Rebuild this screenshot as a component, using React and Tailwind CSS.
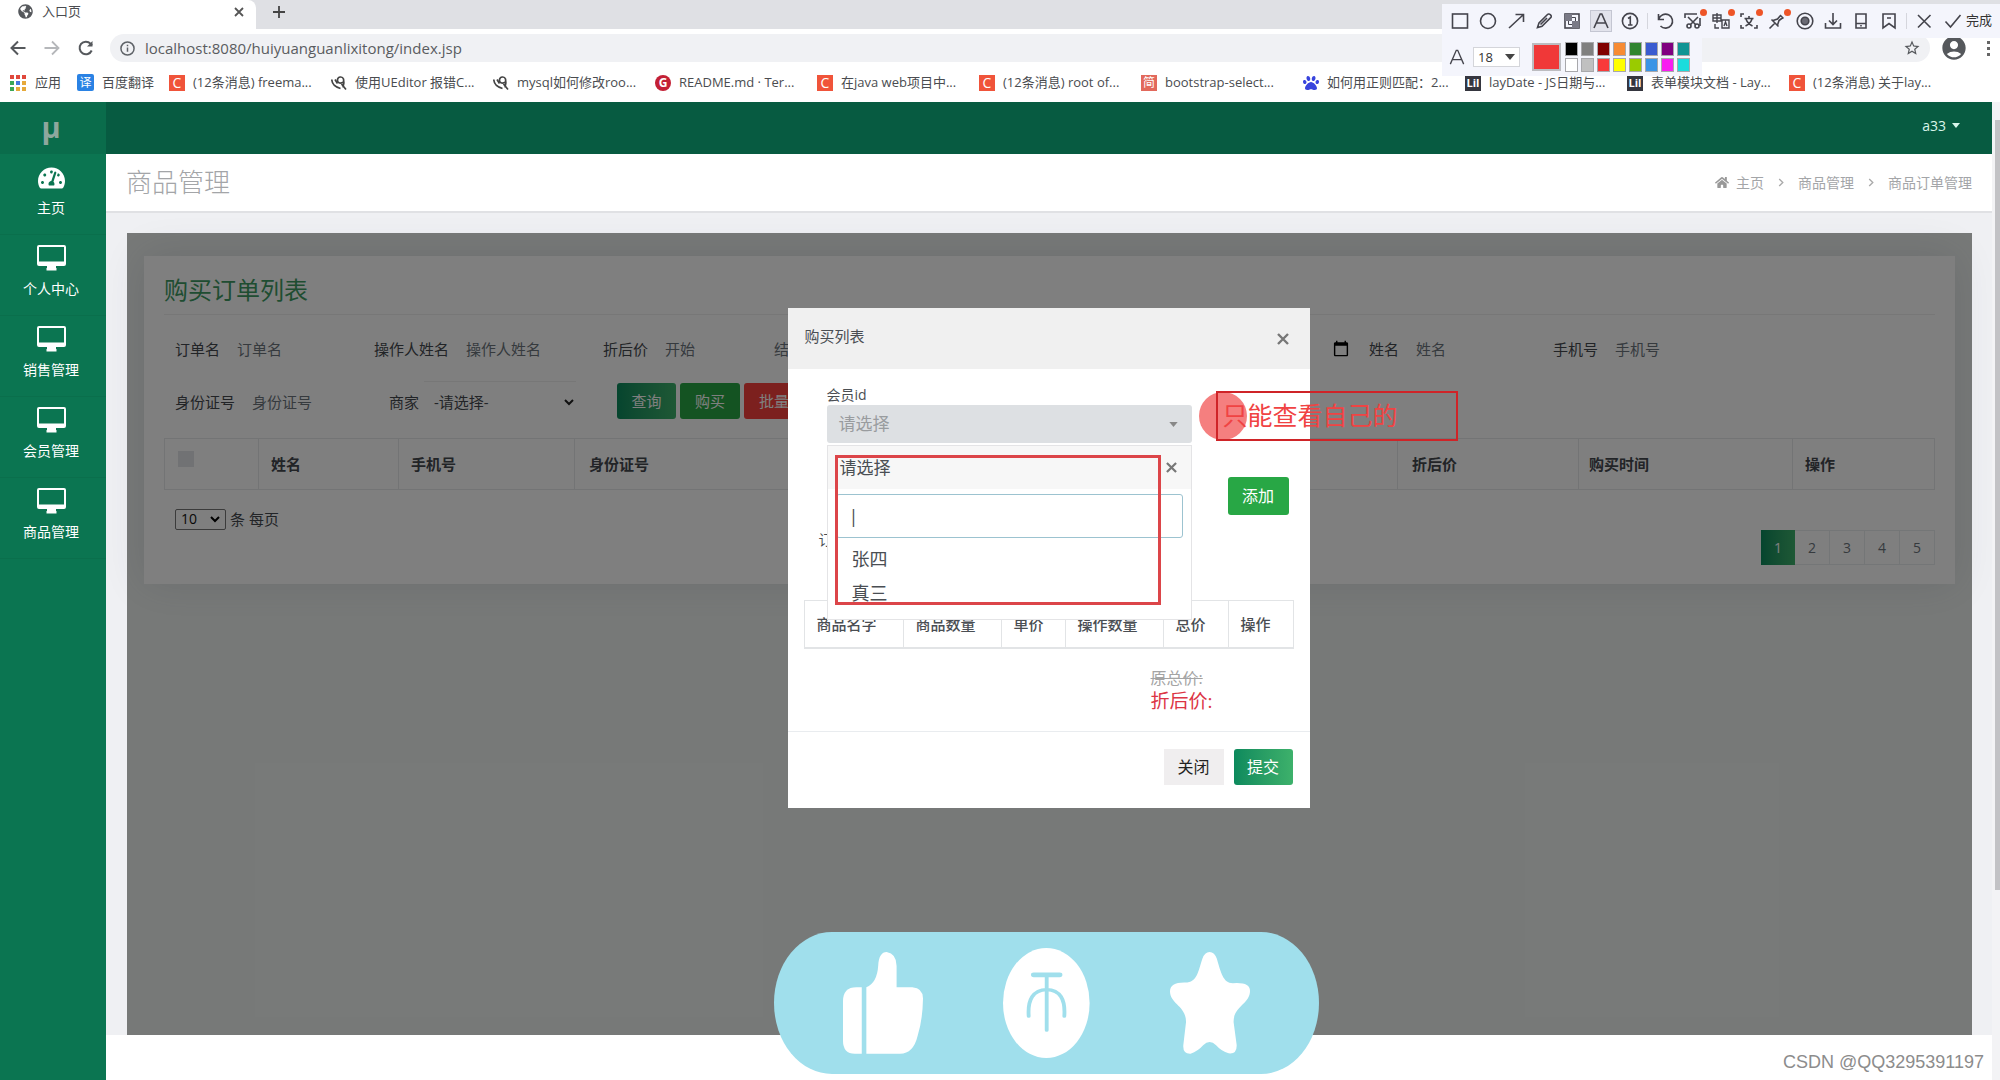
import React from "react";
import { FaTachometerAlt, FaHome, FaPaw, FaGlobeAmericas } from "react-icons/fa";
import { MdAccountCircle, MdStarOutline } from "react-icons/md";

const ICON = {
  fill: "none",
  stroke: "#44444c",
  strokeWidth: 1.6,
  viewBox: "0 0 18 18",
  className: "h-[18px] w-[18px]",
  "aria-hidden": true,
};

const TOOLS = [
  ["矩形", <rect x="1.5" y="2" width="15" height="14" />],
  ["椭圆", <circle cx="9" cy="9" r="7.5" />],
  ["箭头", <path d="M2 16 16 3M8.5 2.5H16.5V10" />],
  ["画笔", <path d="M2.5 15.5 4 11 12.5 2.5a1.8 1.8 0 0 1 2.6 0l.6.6a1.8 1.8 0 0 1 0 2.6L7 14.200zM5.500 12.500 12 6" />],
  [
    "马赛克",
    <>
      <rect x="2" y="2" width="14" height="14" />
      <path d="M2 2h7v7H2zM9 9h7v7H9z" fill="#7a7a86" stroke="none" />
      <path d="M9 5.500h3.500V9M5.500 9v3.500H9" strokeWidth="1" />
    </>,
  ],
  ["文字", <path d="M2 16 8.200 2h1.600L16 16M4.500 11h9" />],
  [
    "序号",
    <>
      <circle cx="9" cy="9" r="7.600" />
      <path d="M7 6.500 9.300 5v8M7 13h4.500" />
    </>,
  ],
  ["|"],
  ["撤销", <path d="M2.500 2v5.500H8M2.800 7.200A7 7 0 1 1 4.500 14" />],
  [
    "截图",
    <>
      <path d="M1 6V2h12M16 6v8M6 13l8-8M12 13 4 5" />
      <circle cx="5" cy="14" r="2" />
      <circle cx="13" cy="14" r="2" />
    </>,
    true,
  ],
  ["翻译", <path d="M1 3h8v6H1zM5 1v10M1 6h8M10 8h7v8h-7zM12 14l1.500-4 1.500 4M3 12v4h4" strokeWidth="1.400" />, true],
  ["识别", <path d="M1 5V2h3M1 13v3h3M17 13v3h-3M4.500 6.500h9M9 4v2.500M6 7c1 3 3.500 5.500 6.500 7M12 7c-1 3-3.500 5.500-6.500 7" />, true],
  ["钉住", <path d="M1.500 16.500 7 11M3.500 7.500 10.500 14.500M5 8.500 9.500 7 12.500 3.500M9.500 13 11 8.500 15 5.500M12 3l3.500 3.500" />, true],
  [
    "录制",
    <>
      <circle cx="9" cy="9" r="7.800" />
      <circle cx="9" cy="9" r="3.800" fill="#6a6a74" />
    </>,
  ],
  ["保存", <path d="M9 1v11M5 8.500 9 12.500 13 8.500M1.500 11v5h15v-5" />],
  ["手机", <path d="M4 2h10v14H4zM4 11.500h10M9 13v1.500" />],
  ["收藏", <path d="M3 2h12v14l-6-4.500L3 16zM7 6h4" />],
  ["|"],
  ["取消", <path d="M3 3 15.500 15.500M15.500 3 3 15.500" />],
];

const SWATCHES = [
  "bg-[#000000]", "bg-[#808080]", "bg-[#800000]", "bg-[#f78b33]", "bg-[#308430]", "bg-[#3a5bd0]", "bg-[#800080]", "bg-[#109494]",
  "bg-[#ffffff]", "bg-[#c0c0c0]", "bg-[#f83a3a]", "bg-[#ffff00]", "bg-[#9acb00]", "bg-[#3a94e6]", "bg-[#f81df0]", "bg-[#1bdcdc]",
];

function Annotator() {
  return (
    <div className="absolute top-1 right-0 flex flex-col items-start text-[#333]">
      <div className="flex h-[34px] items-center bg-[#f4f5fc] pr-2 pl-1">
        {TOOLS.map(([name, art, hot], i) =>
          name === "|" ? (
            <span key={i} className="mx-[3px] h-4 w-px bg-[#d5d6dd]" />
          ) : (
            <button
              key={i}
              aria-label={name}
              className={
                name === "文字"
                  ? "relative mx-1 flex h-[22px] w-[22px] items-center justify-center border border-[#c4c6d2] bg-[#e2e3ec]"
                  : "relative flex h-7 w-[28px] items-center justify-center"
              }
            >
              <svg {...ICON}>{art}</svg>
              {hot && <span className="absolute top-[2px] right-0 h-[7px] w-[7px] rounded-full bg-[#ee5528]" />}
            </button>
          ),
        )}
        <button className="ml-[6px] flex items-center gap-1 text-[13px]">
          <svg {...ICON}>
            <path d="M1.500 9.500 6.500 15 16.500 3" />
          </svg>
          完成
        </button>
      </div>
      <div className="flex h-[38px] items-center bg-[#f4f5fc] pr-3 pl-[7px]">
        <svg fill="none" stroke="#44444c" strokeWidth="1.500" viewBox="0 0 18 18" className="h-[18px] w-4">
          <path d="M1.500 17 8.200 1.500h1.600L16.500 17M4 12h10" />
        </svg>
        <label className="relative ml-2 flex h-5 w-[47px] items-center border border-[#d4d5da] bg-white">
          <select aria-label="字号" className="w-full appearance-none bg-transparent pl-1 text-[13px] leading-4">
            <option>18</option>
          </select>
          <svg viewBox="0 0 10 6" className="pointer-events-none absolute right-1 h-[6px] w-[10px]" fill="#444">
            <path d="M0 0h10L5 6z" />
          </svg>
        </label>
        <button aria-label="当前颜色" className="ml-3 h-7 w-[29px] border-2 border-[#bcbcc0] bg-[#f03838]" />
        <div className="ml-1 grid grid-cols-8 gap-x-[3px] gap-y-[2px]">
          {SWATCHES.map((c) => (
            <button key={c} aria-label={c} className={"h-[14px] w-[13px] border border-[#a8a8ac] " + c} />
          ))}
        </div>
      </div>
    </div>
  );
}

const csdn = <span className="flex h-4 w-4 items-center justify-center bg-[#f0543a] text-[14px] leading-4 text-white">C</span>;
const knife = (
  <svg viewBox="0 0 16 16" className="h-4 w-4" fill="none" stroke="#444" strokeWidth="1.700">
    <path d="M.8 4.500C1 9 3 11.500 9.500 13.500M4 4.500 6.500 8.500" />
    <path d="M12.500 6.800C9 9.500 6 7.500 6.500 4.500 7 1.500 11.500 1 12.500 4c.8 3.500.5 6-.5 8.500M10.500 9l4.500 5.500" />
  </svg>
);
const lay = <span className="flex h-4 w-[17px] items-center justify-center bg-[#35363f] text-[11px] leading-4 font-bold text-white">Lil</span>;

const BOOKMARKS = [
  [csdn, "(12条消息) freema..."],
  [knife, "使用UEditor 报错C..."],
  [knife, "mysql如何修改roo..."],
  [
    <span className="flex h-4 w-4 items-center justify-center rounded-full bg-[#c32035] text-[12px] leading-4 font-bold text-white">G</span>,
    "README.md · Ter...",
  ],
  [csdn, "在java web项目中..."],
  [csdn, "(12条消息) root of..."],
  [<span className="flex h-4 w-4 items-center justify-center bg-[#e2695c] text-[12px] leading-4 text-white">简</span>, "bootstrap-select..."],
  [<FaPaw className="h-4 w-4 text-[#3844dd]" />, "如何用正则匹配：2..."],
  [lay, "layDate - JS日期与..."],
  [lay, "表单模块文档 - Lay..."],
  [csdn, "(12条消息) 关于lay..."],
];

const APP_DOTS = [
  "bg-[#e0483c]", "bg-[#e0483c]", "bg-[#e0483c]", "bg-[#3aa757]", "bg-[#4478e0]", "bg-[#e6a93a]", "bg-[#3aa757]", "bg-[#e6a93a]", "bg-[#e6a93a]",
];

function Browser() {
  return (
    <header className="relative bg-white text-[#4a4c50]">
      <div className="flex h-[29px] bg-[#dfe0e4]">
        <div className="flex w-64 items-center rounded-tr-lg bg-white pr-3 pb-[6px] pl-[18px] text-[13px]">
          <FaGlobeAmericas className="h-[15px] w-[15px] text-[#55585c]" />
          <span className="ml-[9px] flex-1">入口页</span>
          <button aria-label="关闭标签页">
            <svg viewBox="0 0 10 10" className="h-[10px] w-[10px]" stroke="#555" strokeWidth="1.800">
              <path d="M1 1 9 9M9 1 1 9" />
            </svg>
          </button>
        </div>
        <button aria-label="新标签页" className="ml-4 pb-[6px]">
          <svg viewBox="0 0 14 14" className="h-[14px] w-[14px]" stroke="#444" strokeWidth="1.800">
            <path d="M7 1v12M1 7h12" />
          </svg>
        </button>
      </div>
      <div className="flex h-[38px] items-center pr-2 pl-[10px]">
        <button aria-label="后退">
          <svg viewBox="0 0 16 16" className="h-4 w-4" fill="none" stroke="#55585c" strokeWidth="2">
            <path d="M15.500 8H2M8 1.500 1.500 8 8 14.500" />
          </svg>
        </button>
        <button aria-label="前进" className="ml-[18px]">
          <svg viewBox="0 0 16 16" className="h-4 w-4" fill="none" stroke="#b5b7ba" strokeWidth="1.800">
            <path d="M.5 8H14M8 1.500 14.500 8 8 14.500" />
          </svg>
        </button>
        <button aria-label="刷新" className="ml-[18px]">
          <svg viewBox="0 0 16 16" className="h-4 w-4" fill="none" stroke="#55585c" strokeWidth="2">
            <path d="M13.700 10.500A6.300 6.300 0 1 1 12.500 3.600L14 5.300" />
            <path d="M14.500 1v5.500H9z" fill="#55585c" stroke="none" />
          </svg>
        </button>
        <div className="ml-4 flex h-7 flex-1 items-center rounded-full bg-[#f0f1f4] pr-[9px] pl-[10px]">
          <svg viewBox="0 0 16 16" className="h-[15px] w-[15px]" fill="none" stroke="#5f6368" strokeWidth="1.600">
            <circle cx="8" cy="8" r="7" />
            <path d="M8 7v4.500M8 4v1.600" />
          </svg>
          <input
            aria-label="地址"
            className="ml-[10px] flex-1 bg-transparent text-[15px] text-[#5a5c60] outline-none"
            defaultValue="localhost:8080/huiyuanguanlixitong/index.jsp"
          />
          <MdStarOutline className="h-[18px] w-[18px] text-[#55585c]" />
        </div>
        <MdAccountCircle className="ml-[10px] h-7 w-7 text-[#55585c]" />
        <button aria-label="菜单" className="ml-[19px] flex flex-col gap-[3px] pr-[2px]">
          <span className="h-[3px] w-[3px] bg-[#666]" />
          <span className="h-[3px] w-[3px] bg-[#666]" />
          <span className="h-[3px] w-[3px] bg-[#666]" />
        </button>
      </div>
      <nav className="flex h-[35px] items-center overflow-hidden pb-1 pl-[10px] text-[13px] whitespace-nowrap">
        <a href="#apps" className="flex w-[67px] shrink-0 items-center gap-[9px]">
          <span className="grid grid-cols-3 gap-[2px]">
            {APP_DOTS.map((c, i) => (
              <span key={i} className={"h-[4px] w-[4px] " + c} />
            ))}
          </span>
          应用
        </a>
        <a href="#fanyi" className="flex w-[92px] shrink-0 items-center gap-2">
          <span className="flex h-[17px] w-[17px] items-center justify-center rounded-[2px] bg-[#2a82e4] text-[12px] leading-4 text-white">译</span>
          百度翻译
        </a>
        {BOOKMARKS.map(([icon, text], i) => (
          <a key={i} href="#bookmark" className="flex w-[162px] shrink-0 items-center gap-2">
            <span className="flex w-4 shrink-0">{icon}</span>
            {text}
          </a>
        ))}
      </nav>
      <Annotator />
    </header>
  );
}

function Monitor() {
  return (
    <svg viewBox="0 0 29 26" className="h-[26px] w-[29px]" fill="currentColor" aria-hidden="true">
      <path fillRule="evenodd" d="M2 0h25a2 2 0 0 1 2 2v17a2 2 0 0 1-2 2h-8v2h.5v2.500h-10V23h.5v-2H2a2 2 0 0 1-2-2V2A2 2 0 0 1 2 0zM2 2v14.500h25V2z" />
    </svg>
  );
}

function Sidebar() {
  return (
    <aside className="flex w-[106px] shrink-0 flex-col bg-[#0b7551] text-[14px] leading-5 text-white">
      <div className="flex h-[52px] items-center justify-center bg-[#0a6c4b] pr-1 pb-[3px] font-['Open_Sans'] text-[29px] font-bold text-[#8ea79d]">μ</div>
      {["主页", "个人中心", "销售管理", "会员管理", "商品管理"].map((t, i) => (
        <a
          key={t}
          href="#menu"
          className={
            i === 0
              ? "flex h-[81px] flex-col items-center gap-2 border-b border-[#0a6f4c] pt-3 pr-1"
              : "flex h-[81px] flex-col items-center gap-2 border-b border-[#0a6f4c] pt-[10px] pr-1"
          }
        >
          {i === 0 ? <FaTachometerAlt className="h-6 w-[27px]" /> : <Monitor />}
          {t}
        </a>
      ))}
    </aside>
  );
}

function Field({ id, label }) {
  return (
    <>
      <label htmlFor={id} className="mr-[5px] shrink-0">
        {label}
      </label>
      <input id={id} placeholder={label} className="mr-1 h-10 w-[145px] shrink-0 px-3 placeholder:text-[#6c757d]" />
    </>
  );
}

const green = "bg-linear-to-r from-[#0b8a5d] to-[#3db16b]";

function OrderCard() {
  return (
    <section className="h-[328px] bg-white px-5 pt-[18px] text-[#44484e] shadow-[0_0_40px_rgba(60,60,90,0.120)]">
      <h2 className="border-b border-[#eee] pb-2 text-[24px] leading-8 text-[#3f9a63]">购买订单列表</h2>
      <form className="mt-2 text-[15px]">
        <div className="flex h-[52px] items-center pl-[11px]">
          <Field id="order" label="订单名" />
          <Field id="operator" label="操作人姓名" />
          <label htmlFor="from" className="mr-[5px] shrink-0">
            折后价
          </label>
          <input id="from" placeholder="开始" className="h-10 w-[109px] shrink-0 px-3 placeholder:text-[#6c757d]" />
          <input aria-label="结束" placeholder="结束" className="mr-1 h-10 w-[109px] shrink-0 px-3 placeholder:text-[#6c757d]" />
          <label htmlFor="date" className="mr-[5px] shrink-0">
            购买时间
          </label>
          <input id="date" type="date" className="mr-[5px] h-10 w-[210px] shrink-0 px-3" />
          <input
            aria-label="购买时间结束"
            type="date"
            className="mr-[5px] h-10 w-[209px] shrink-0 px-3 [&::-webkit-calendar-picker-indicator]:h-[18px] [&::-webkit-calendar-picker-indicator]:w-[18px]"
          />
          <Field id="name" label="姓名" />
          <Field id="phone" label="手机号" />
        </div>
        <div className="flex h-[54px] items-center pl-[11px]">
          <Field id="idcard" label="身份证号" />
          <label htmlFor="shop" className="mr-[5px]">
            商家
          </label>
          <div className="relative flex h-[42px] w-[152px] items-center border-t border-[#eee]">
            <select id="shop" className="h-full w-full appearance-none pl-[10px]">
              <option>-请选择-</option>
            </select>
            <svg viewBox="0 0 10 7" className="pointer-events-none absolute right-[2px] h-[7px] w-[10px]" fill="none" stroke="#222" strokeWidth="2">
              <path d="M1 1l4 4 4-4" />
            </svg>
          </div>
          <div className="ml-[41px] flex gap-1 pb-[2px] text-white">
            <button type="button" className={"h-9 w-[59px] rounded-[3px] " + green}>
              查询
            </button>
            <button type="button" className="h-9 w-[60px] rounded-[3px] bg-[#28a745]">
              购买
            </button>
            <button type="button" className="h-9 w-[90px] rounded-[3px] bg-[#f8403c]">
              批量删除
            </button>
          </div>
        </div>
      </form>
      <table className="mt-[9px] w-full table-fixed border-collapse text-left text-[15px]">
        <thead>
          <tr className="h-[51px]">
            <th className="w-[94px] border border-[#e6e8ea] pl-[13px]">
              <input type="checkbox" aria-label="全选" className="mb-1 h-4 w-4 appearance-none bg-[#e3e4e8]" />
            </th>
            <th className="w-[140px] border border-[#e6e8ea] pl-3">姓名</th>
            <th className="w-[176px] border border-[#e6e8ea] pl-3">手机号</th>
            <th className="border border-[#e6e8ea] pl-[14px]">身份证号</th>
            <th className="w-[181px] border border-[#e6e8ea] pl-[14px]">折后价</th>
            <th className="w-[214px] border border-[#e6e8ea] pl-[10px]">购买时间</th>
            <th className="w-[142px] border border-[#e6e8ea] pl-3">操作</th>
          </tr>
        </thead>
      </table>
      <div className="flex items-start justify-between pl-[11px] text-[15px]">
        <label className="mt-[18px] flex items-center gap-1">
          <span className="relative flex h-[21px] w-[51px] items-center rounded-[2px] border border-[#767676]">
            <select className="h-full w-full appearance-none pl-[5px] text-[14px] leading-[18px] text-[#111]">
              <option>10</option>
            </select>
            <svg viewBox="0 0 10 7" className="pointer-events-none absolute right-[5px] h-[7px] w-[10px]" fill="none" stroke="#000" strokeWidth="2">
              <path d="M1 1l4 4 4-4" />
            </svg>
          </span>
          条 每页
        </label>
        <nav aria-label="分页" className="mt-10 flex">
          {[1, 2, 3, 4, 5].map((n) => (
            <button
              key={n}
              className={
                n === 1
                  ? "h-[35px] w-[34px] text-[14px] text-white " + green
                  : "h-[35px] w-[35px] border border-l-0 border-[#e9ecef] text-[14px] text-[#6d757c]"
              }
            >
              {n}
            </button>
          ))}
        </nav>
      </div>
    </section>
  );
}

function Close({ size }) {
  return (
    <svg viewBox="0 0 12 12" className={size} stroke="#777" strokeWidth="2.400">
      <path d="M1 1 11 11M11 1 1 11" />
    </svg>
  );
}

function MemberMenu() {
  return (
    <div className="absolute inset-x-0 top-full z-10 mt-[2px] border border-[#e4e4e6] bg-white">
      <div className="flex h-[43px] items-center justify-between bg-[#f7f7f7] pr-[14px] pl-3 text-[17px]">
        请选择
        <button aria-label="关闭下拉">
          <Close size="h-[11px] w-[11px]" />
        </button>
      </div>
      <div className="px-2 pt-[5px]">
        <input
          aria-label="搜索会员"
          className="block h-11 w-full rounded-[3px] border border-[#9cc3d0] px-3 text-[18px] outline-none"
          defaultValue="|"
        />
      </div>
      <ul className="pt-1 pb-[9px] pl-6 text-[18px] leading-[34px]">
        <li>张四</li>
        <li>真三</li>
      </ul>
    </div>
  );
}

function Modal() {
  return (
    <div role="dialog" aria-label="购买列表" className="relative flex h-[500px] w-[522px] flex-col bg-white text-[#4a4e53]">
      <div className="flex h-[61px] items-center justify-between bg-[#f0f0f0] pr-[21px] pl-[17px]">
        <h3 className="pb-[5px] text-[15px]">购买列表</h3>
        <button aria-label="关闭">
          <Close size="h-3 w-3" />
        </button>
      </div>
      <div className="flex h-[231px] items-start pt-[18px] pl-[39px]">
        <div className="w-[365px] shrink-0">
          <label htmlFor="member" className="block h-[18px] text-[14px] leading-4">
            会员id
          </label>
          <div className="relative">
            <button id="member" className="flex h-[38px] w-full items-center justify-between rounded-[3px] bg-[#dde0e3] pr-[14px] pl-3 text-[17px] text-[#999c9f]">
              请选择
              <svg viewBox="0 0 10 6" className="h-[5px] w-[9px]" fill="#888">
                <path d="M0 0h10L5 6z" />
              </svg>
            </button>
            <MemberMenu />
          </div>
          <div className="mt-[86px] -ml-2 text-[14px]">订单名</div>
        </div>
        <button className="mt-[90px] ml-9 h-[38px] w-[61px] shrink-0 rounded-[3px] bg-[#28a745] text-[16px] text-white">添加</button>
      </div>
      <table className="mr-4 ml-4 table-fixed border-collapse text-left text-[15px]">
        <thead>
          <tr className="h-[47px]">
            <th className="w-[99px] border border-b-2 border-[#e2e4e6] pl-3 font-medium">商品名字</th>
            <th className="w-[98px] border border-b-2 border-[#e2e4e6] pl-3 font-medium">商品数量</th>
            <th className="w-16 border border-b-2 border-[#e2e4e6] pl-3 font-medium">单价</th>
            <th className="w-[98px] border border-b-2 border-[#e2e4e6] pl-3 font-medium">操作数量</th>
            <th className="w-[65px] border border-b-2 border-[#e2e4e6] pl-3 font-medium">总价</th>
            <th className="border border-b-2 border-[#e2e4e6] pl-3 font-medium">操作</th>
          </tr>
        </thead>
      </table>
      <div className="mt-[19px] ml-[363px] h-[63px]">
        <div className="text-[16px] leading-5 text-[#a4a4a4] line-through">原总价:</div>
        <div className="text-[19px] leading-[26px] text-[#dc3545]">折后价:</div>
      </div>
      <div className="flex flex-1 items-start justify-end gap-[10px] border-t border-[#e9ecef] pt-[17px] pr-[17px] text-[16px]">
        <button className="h-9 w-[60px] bg-[#f0eeef] text-[#222]">关闭</button>
        <button className={"h-9 w-[59px] rounded-[3px] text-white " + green}>提交</button>
      </div>

      <div className="pointer-events-none absolute top-[147px] left-[47px] z-20 h-[150px] w-[326px] border-3 border-[#dc4549]" />
      <div className="pointer-events-none absolute top-[84px] left-[411px] z-20 h-12 w-12 rounded-full bg-[#f57f7f]" />
      <div className="pointer-events-none absolute top-[83px] left-[428px] z-20 flex h-[50px] w-[242px] items-center border-2 border-[#cf2428] pl-[5px] text-[25px] text-[#f04343]">
        只能查看自己的
      </div>
    </div>
  );
}

function Praise() {
  return (
    <div className="pointer-events-none absolute inset-x-0 bottom-[6px] z-30 flex justify-center pl-[93px]">
      <div className="flex h-[142px] w-[545px] items-center justify-between rounded-[58px/71px] bg-[#a0dfec] pr-[69px] pl-[69px]">
        <svg viewBox="219 95 209 307" preserveAspectRatio="none" className="h-[102px] w-20" fill="#fff">
          <path d="M268 201h-14q-35 0-35 42v118q0 40 31 40h18z" />
          <path d="M280 201q28-12 31-65c1-27 9-41 22-41q26 5 26 42v64h41q28 2 28 34-1 65-14 112-11 54-46 54h-88z" />
        </svg>
        <svg viewBox="636 85 227 328" preserveAspectRatio="none" className="h-[110px] w-[87px]">
          <ellipse cx="749" cy="249" rx="113" ry="164" fill="#fff" />
          <g fill="none" stroke="#a0dfec" strokeLinecap="round">
            <path d="M716 165h68" strokeWidth="14" />
            <path d="M750 170v160M703 288c-3-50 12-78 47-79 35 1 49 29 46 79" strokeWidth="10" />
          </g>
        </svg>
        <svg viewBox="1072 100 210 304" preserveAspectRatio="none" className="h-[102px] w-20" fill="#fff">
          <path d="M1176 100q13 1 19 20c10 38 16 73 42 73q45-4 45 23c0 39-44 45-43 93l8 68q1 28-21 25-19-6-33-24-17-19-34 0-14 18-33 25-21 1-19-26l7-68c1-48-42-54-42-92q0-27 40-26c32 0 34-35 45-71q6-20 19-20z" />
        </svg>
      </div>
    </div>
  );
}

function Chevron() {
  return (
    <svg viewBox="0 0 6 10" className="mx-[14px] h-[9px] w-[6px]" fill="none" stroke="#aaa" strokeWidth="1.500" aria-hidden="true">
      <path d="M1 1l4 4-4 4" />
    </svg>
  );
}

export default function App() {
  return (
    <div className="relative flex min-h-screen flex-col overflow-hidden bg-white font-['Open_Sans','Noto_Sans_CJK_SC',sans-serif]">
      <Browser />
      <div className="flex flex-1">
        <Sidebar />
        <div className="flex min-w-0 flex-1 flex-col">
          <div className="flex h-[52px] items-center justify-end bg-[#075b41] pr-8 pb-[5px] text-[14px] text-[#d8f5ea]">
            <button className="flex items-center gap-[6px]">
              a33
              <svg viewBox="0 0 8 5" className="h-[5px] w-2" fill="currentColor">
                <path d="M0 0h8L4 5z" />
              </svg>
            </button>
          </div>
          <div className="flex h-[59px] items-center justify-between border-b-2 border-[#e0e1e4] bg-white pr-5 pl-5 text-[#a3a5a8]">
            <h1 className="text-[26px] font-light">商品管理</h1>
            <nav className="flex items-center text-[14px]">
              <FaHome className="mr-[7px] h-[13px] w-[14px] text-[#999]" />
              <a href="#home">主页</a>
              <Chevron />
              <a href="#goods">商品管理</a>
              <Chevron />
              <a href="#orders">商品订单管理</a>
            </nav>
          </div>
          <main className="flex h-[822px] flex-col bg-[#eff0f3] pt-5 pr-5 pl-[21px]">
            <div className="relative flex-1 bg-[#eff3f1] px-[17px] pt-[23px]">
              <OrderCard />
              <div className="absolute inset-0 flex justify-center bg-black/50 pt-[75px] pr-[2px]">
                <Modal />
              </div>
            </div>
          </main>
          <div className="flex flex-1 items-center justify-end pr-2 font-['Liberation_Sans'] text-[18px] text-[#8c8c8c]">
            <span className="pt-[10px]">CSDN @QQ3295391197</span>
          </div>
        </div>
        <div className="flex w-2 flex-col items-end bg-[#f3f3f5] pt-[18px]">
          <div className="h-[770px] w-[5px] bg-[#c2c2c5]" />
        </div>
      </div>
      <Praise />
    </div>
  );
}
